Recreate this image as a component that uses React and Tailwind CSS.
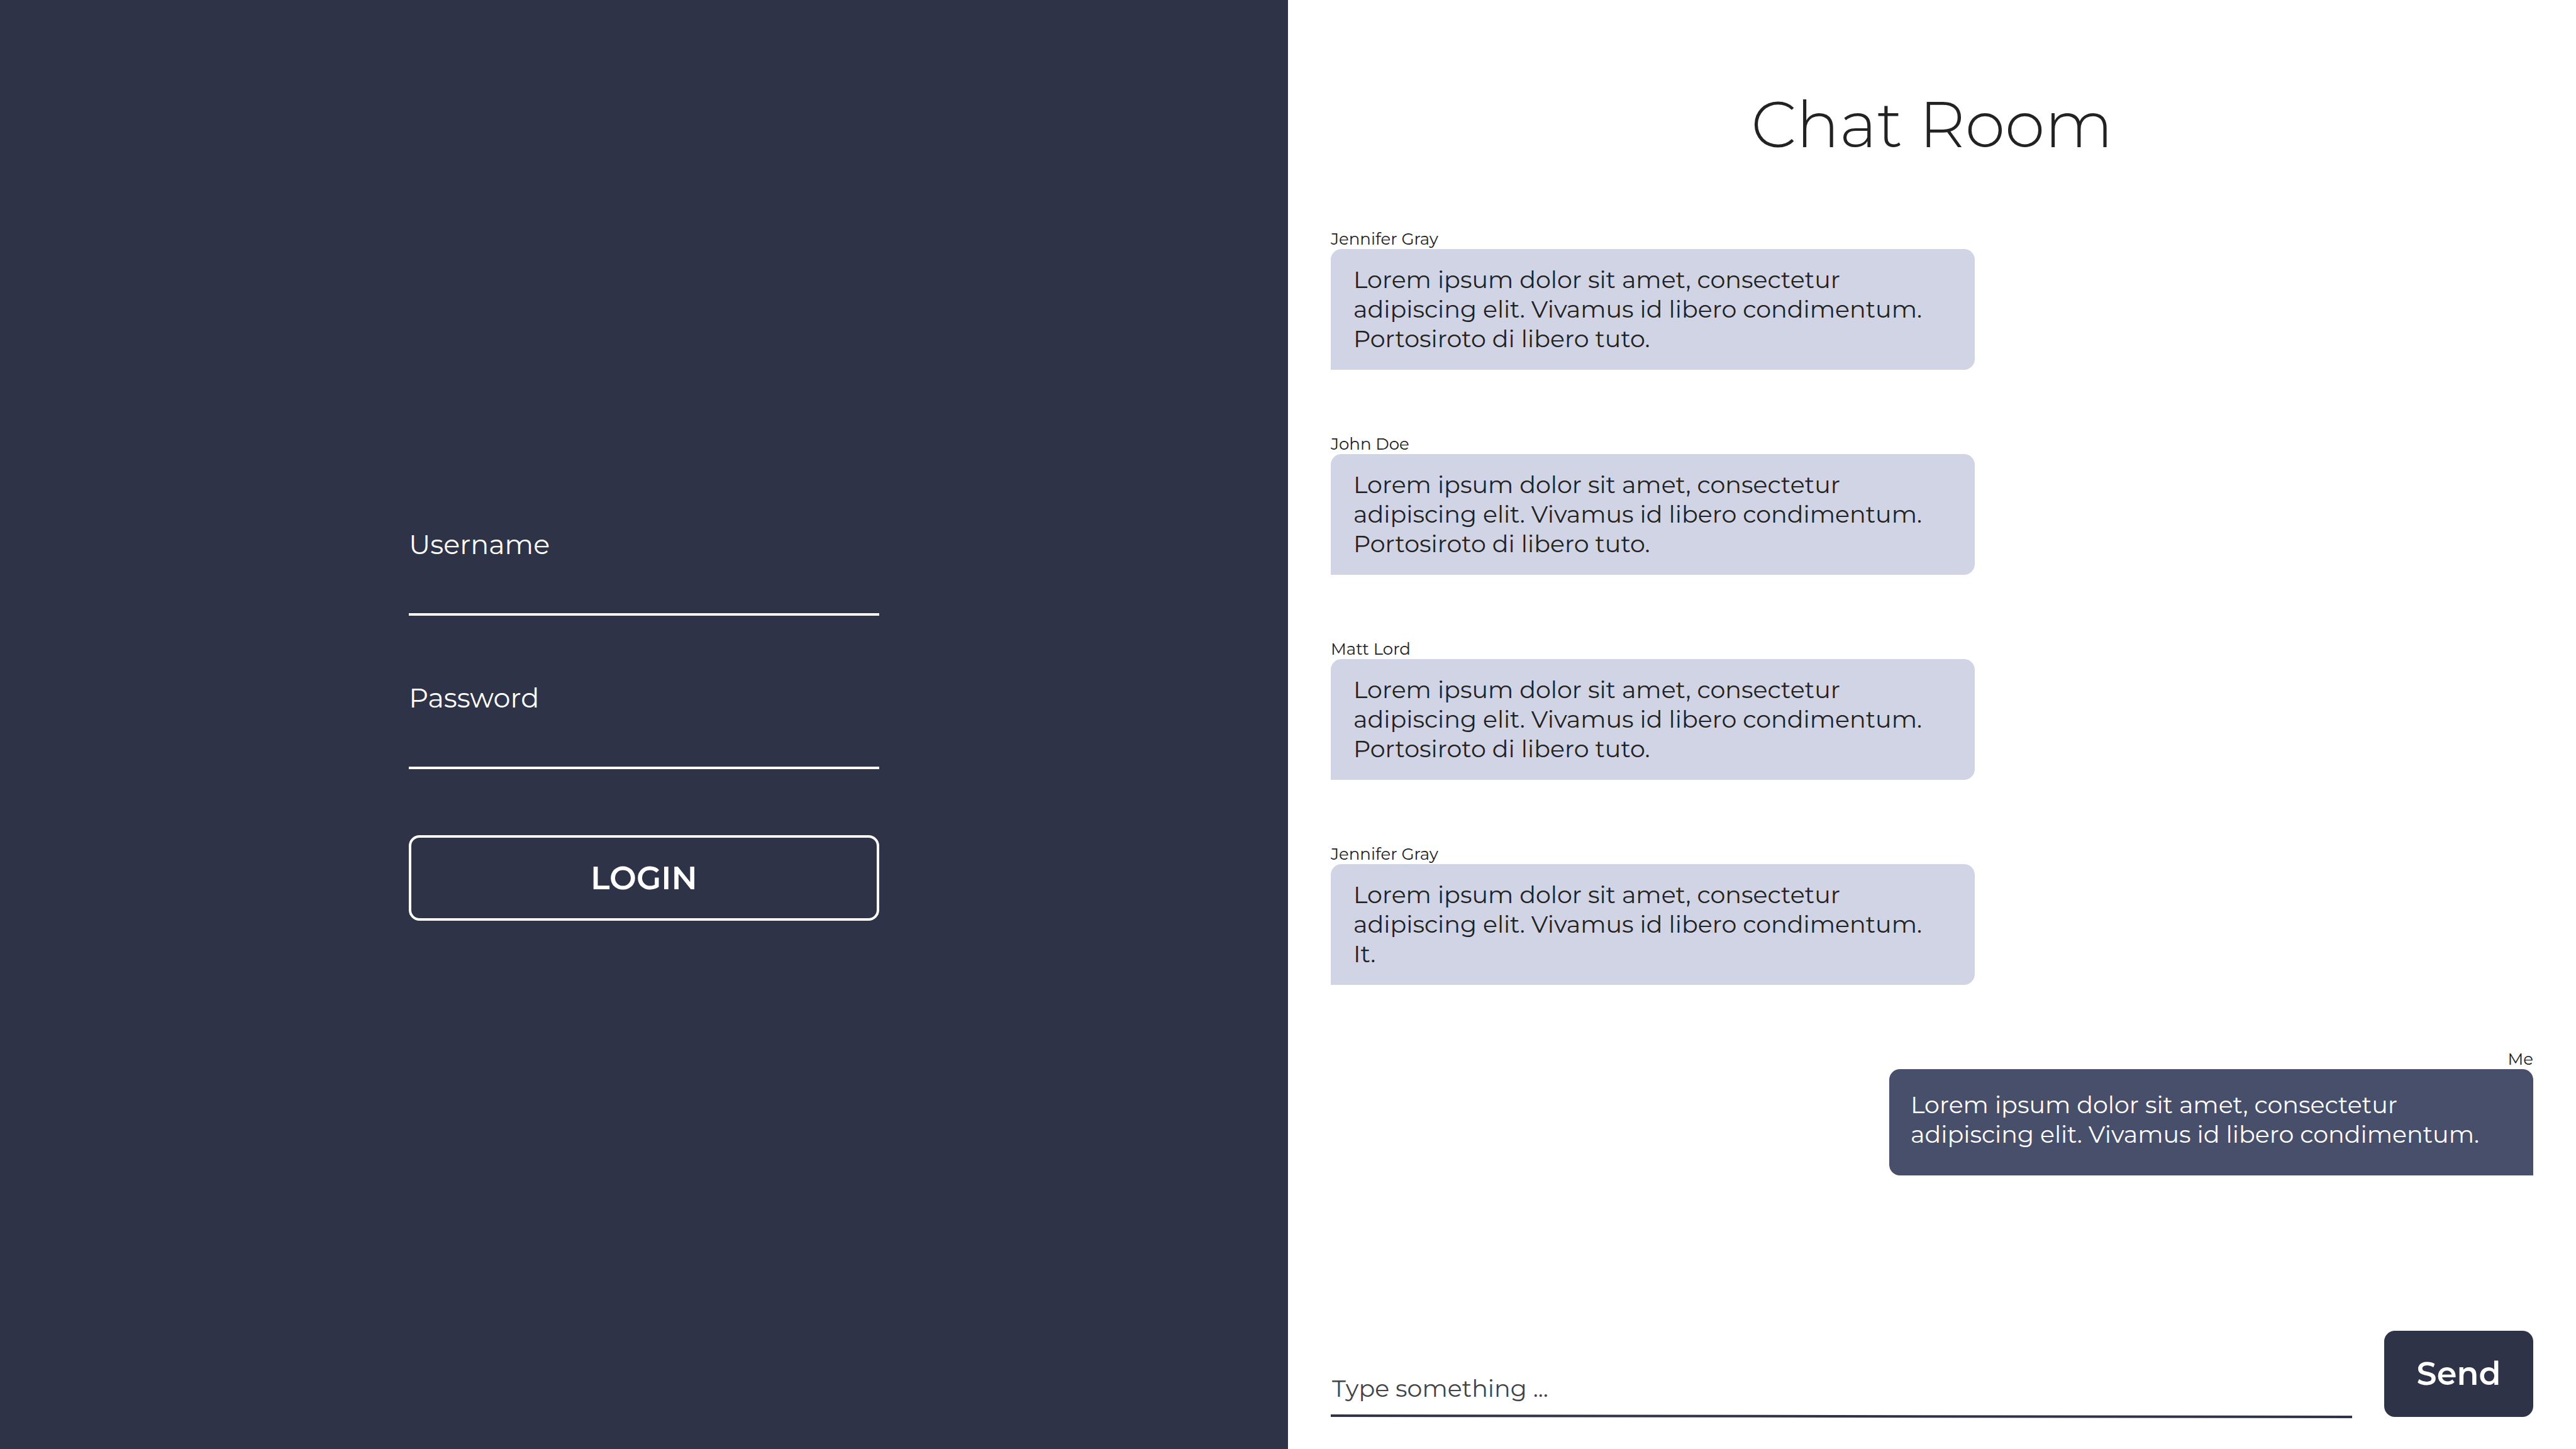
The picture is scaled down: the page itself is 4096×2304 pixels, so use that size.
const LOREM = "Lorem ipsum dolor sit amet, consectetur adipiscing elit. Vivamus id libero condimentum.";

const MESSAGES = [
  { id: 1, author: "Jennifer Gray", text: `${LOREM} Portosiroto di libero tuto.` },
  { id: 2, author: "John Doe", text: `${LOREM} Portosiroto di libero tuto.` },
  { id: 3, author: "Matt Lord", text: `${LOREM} Portosiroto di libero tuto.` },
  { id: 4, author: "Jennifer Gray", text: `${LOREM} It.` },
  { id: 5, author: "Me", text: LOREM, mine: true },
];

function Field({ id, label, type }) {
  return (
    <div className="flex flex-col">
      <label htmlFor={id} className="text-[43px] leading-[52px]">
        {label}
      </label>
      <input
        id={id}
        name={id}
        type={type}
        className="h-[87px] w-full border-b-4 border-white bg-transparent text-[43px] outline-none"
      />
    </div>
  );
}

function LoginPanel() {
  return (
    <section className="flex flex-col items-center justify-center bg-[#2f3347] text-white">
      <form className="flex w-[36.5%] flex-col gap-[105px]" onSubmit={(e) => e.preventDefault()}>
        <Field id="username" label="Username" type="text" />
        <Field id="password" label="Password" type="password" />
        <button
          type="submit"
          className="h-[136px] rounded-[17px] border-4 border-white text-[51px] font-semibold"
        >
          LOGIN
        </button>
      </form>
    </section>
  );
}

function Message({ author, text, mine }) {
  return (
    <li className={mine ? "flex flex-col items-end" : "flex flex-col items-start"}>
      <span className="text-[26px] leading-8">{author}</span>
      <p
        className={
          mine
            ? "w-[25vw] rounded-[17px] rounded-br-none bg-[#484f6b] pt-[33px] pr-[42px] pb-[42px] pl-[34px] text-[38px] leading-[47px] text-white"
            : "w-[25vw] rounded-[17px] rounded-bl-none bg-[#d1d4e5] pt-[25px] pr-[42px] pb-[26px] pl-9 text-[38px] leading-[47px]"
        }
      >
        {text}
      </p>
    </li>
  );
}

function ChatPanel() {
  return (
    <section className="flex flex-col bg-white px-[68px] pt-[136px] pb-[49px] text-[#222222]">
      <h1 className="text-center text-[102px] leading-[124px] font-light">Chat Room</h1>
      <ul className="mt-[104px] flex flex-1 flex-col gap-[102px]">
        {MESSAGES.map((m) => (
          <Message key={m.id} author={m.author} text={m.text} mine={m.mine} />
        ))}
      </ul>
      <form className="flex items-start gap-[51px]" onSubmit={(e) => e.preventDefault()}>
        <div className="flex flex-1 flex-col">
          <input
            type="text"
            name="message"
            aria-label="Message"
            placeholder="Type something ..."
            className="h-[133px] w-full bg-transparent px-0.5 pt-[50px] text-[38px] outline-none placeholder:text-[#444444]"
          />
          <svg
            className="block h-[6px] w-full"
            viewBox="0 0 1624 6"
            preserveAspectRatio="none"
            aria-hidden="true"
          >
            <polygon points="0,0 1624,2 1624,6 0,4" fill="#2f3347" />
          </svg>
        </div>
        <button
          type="submit"
          className="h-[137px] w-[237px] rounded-[17px] bg-[#2f3347] text-[51px] font-semibold text-white"
        >
          Send
        </button>
      </form>
    </section>
  );
}

export default function App() {
  return (
    <main className="grid min-h-screen grid-cols-2 font-['Montserrat','Inter',sans-serif]">
      <LoginPanel />
      <ChatPanel />
    </main>
  );
}
